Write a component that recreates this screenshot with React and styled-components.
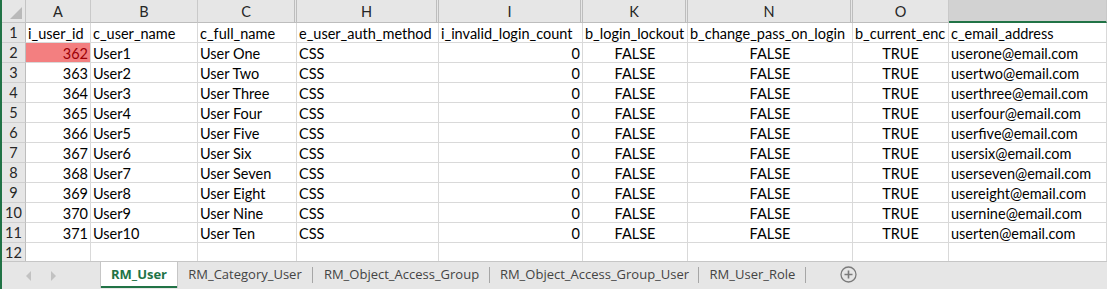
import React from 'react';
import styled, { createGlobalStyle } from 'styled-components';

const GlobalStyle = createGlobalStyle`
html, body {
  margin: 0;
  padding: 0;
  background: #ffffff;
}
`

const COLS = '24px 65px 107px 99px 142px 144px 105px 165px 96px 1fr';

const StyledWindow = styled.div`
width: 1107px;
height: 289px;
display: flex;
overflow: hidden;
background: #ffffff;
font-family: Lato, "Liberation Sans", sans-serif;
`
const StyledStrip = styled.div`
width: 2px;
flex-shrink: 0;
background: #217346;
`
const StyledMain = styled.div`
flex: 1;
display: flex;
flex-direction: column;
min-width: 0;
`
const StyledSheet = styled.div`
flex: 1;
overflow: hidden;
`
const StyledRow = styled.div`
display: grid;
grid-template-columns: ${COLS};
height: ${props => props.$height || 20}px;
`
const StyledCorner = styled.div`
position: relative;
background: #e6e6e6;
border-right: 1px solid #c4c4c4;
border-bottom: 1px solid #c4c4c4;
&::after {
  content: '';
  position: absolute;
  right: 3px;
  bottom: 3px;
  width: 0;
  height: 0;
  border-left: 12px solid transparent;
  border-bottom: 12px solid #b9b9b9;
}
`
const StyledColHead = styled.div`
display: flex;
align-items: center;
justify-content: center;
background: ${props => props.$selected ? '#d2d2d2' : '#e6e6e6'};
border-right: ${props => props.$gap ? '3px double #bdbdbd' : '1px solid #c9c9c9'};
border-bottom: ${props => props.$selected ? '2px solid #217346' : '1px solid #bdbdbd'};
color: #262626;
font-size: 14.5px;
padding-top: 1px;
`
const StyledRowHead = styled.div`
display: flex;
align-items: center;
justify-content: center;
background: #e6e6e6;
border-right: 1px solid #bdbdbd;
border-bottom: 1px solid #cfcfcf;
color: #262626;
font-size: 14.5px;
`
const StyledCell = styled.div`
display: flex;
align-items: center;
justify-content: ${props => props.$align === 'right' ? 'flex-end' : props.$align === 'center' ? 'center' : 'flex-start'};
padding: 1px 2px 0 2px;
background: ${props => props.$fill || 'transparent'};
color: ${props => props.$color || '#000000'};
border-right: 1px solid #d9d9d9;
border-bottom: 1px solid #d9d9d9;
font-size: 14.5px;
white-space: nowrap;
overflow: hidden;
`
const StyledTabBar = styled.div`
height: 27px;
flex-shrink: 0;
display: flex;
align-items: stretch;
background: #e6e6e6;
border-top: 1px solid #c6c6c6;
font-family: "Open Sans", "Noto Sans", sans-serif;
`
const StyledNav = styled.div`
width: 99px;
display: flex;
align-items: center;
gap: 20px;
padding-left: 24px;
box-sizing: border-box;
`
const StyledArrow = styled.span`
width: 0;
height: 0;
border-top: 5px solid transparent;
border-bottom: 5px solid transparent;
${props => props.$dir === 'left'
  ? 'border-right: 5px solid #c2c2c2;'
  : 'border-left: 5px solid #c2c2c2;'}
`
const StyledTab = styled.div`
width: ${props => props.$width}px;
box-sizing: border-box;
display: flex;
align-items: center;
justify-content: center;
font-size: 13px;
position: relative;
color: ${props => props.$active ? '#217346' : '#444444'};
font-weight: ${props => props.$active ? 700 : 400};
background: ${props => props.$active ? '#ffffff' : 'transparent'};
border-bottom: ${props => props.$active ? '2px solid #217346' : '2px solid transparent'};
box-shadow: ${props => props.$active ? '-1px 0 0 #c6c6c6, 1px 0 0 #c6c6c6' : 'none'};
margin-bottom: 1px;
${props => props.$sep && `
&::after {
  content: '';
  position: absolute;
  right: 0;
  top: 5px;
  height: 16px;
  width: 1px;
  background: #a6a6a6;
}
`}
`
const StyledAdd = styled.div`
width: 84px;
display: flex;
align-items: center;
justify-content: center;
padding-bottom: 2px;
`

const names = ['One', 'Two', 'Three', 'Four', 'Five', 'Six', 'Seven', 'Eight', 'Nine', 'Ten'];

const letters = [
  { l: 'A' }, { l: 'B' }, { l: 'C', gap: true }, { l: 'H', gap: true }, { l: 'I', gap: true },
  { l: 'K', gap: true }, { l: 'N', gap: true }, { l: 'O' }, { l: '', selected: true },
];

const headers = ['i_user_id', 'c_user_name', 'c_full_name', 'e_user_auth_method', 'i_invalid_login_count',
  'b_login_lockout', 'b_change_pass_on_login', 'b_current_enc', 'c_email_address'];

const tabs = [
  { name: 'RM_User', width: 76, active: true },
  { name: 'RM_Category_User', width: 136, sep: true },
  { name: 'RM_Object_Access_Group', width: 177, sep: true },
  { name: 'RM_Object_Access_Group_User', width: 209, sep: true },
  { name: 'RM_User_Role', width: 107, sep: true },
];

const App = () => {
  return (
    <StyledWindow>
      <GlobalStyle />
      <StyledStrip />
      <StyledMain>
        <StyledSheet>
          <StyledRow $height={23}>
            <StyledCorner />
            {letters.map((c, i) => (
              <StyledColHead key={i} $gap={c.gap} $selected={c.selected}>{c.l}</StyledColHead>
            ))}
          </StyledRow>
          <StyledRow>
            <StyledRowHead>1</StyledRowHead>
            {headers.map(h => <StyledCell key={h}>{h}</StyledCell>)}
          </StyledRow>
          {names.map((n, i) => (
            <StyledRow key={n}>
              <StyledRowHead>{i + 2}</StyledRowHead>
              <StyledCell $align='right' $fill={i === 0 ? '#f37f80' : undefined} $color={i === 0 ? '#9c0006' : undefined}>{362 + i}</StyledCell>
              <StyledCell>User{i + 1}</StyledCell>
              <StyledCell>User {n}</StyledCell>
              <StyledCell>CSS</StyledCell>
              <StyledCell $align='right'>0</StyledCell>
              <StyledCell $align='center'>FALSE</StyledCell>
              <StyledCell $align='center'>FALSE</StyledCell>
              <StyledCell $align='center'>TRUE</StyledCell>
              <StyledCell>user{n.toLowerCase()}@email.com</StyledCell>
            </StyledRow>
          ))}
          <StyledRow>
            <StyledRowHead>12</StyledRowHead>
            {headers.map(h => <StyledCell key={h} />)}
          </StyledRow>
        </StyledSheet>
        <StyledTabBar>
          <StyledNav>
            <StyledArrow $dir='left' />
            <StyledArrow $dir='right' />
          </StyledNav>
          {tabs.map(t => (
            <StyledTab key={t.name} $width={t.width} $active={t.active} $sep={t.sep}>{t.name}</StyledTab>
          ))}
          <StyledAdd>
            <svg width="17" height="17" viewBox="0 0 17 17">
              <circle cx="8.5" cy="8.5" r="7.5" fill="none" stroke="#7b7b7b" strokeWidth="1.3" />
              <path d="M8.5 4.5v8M4.5 8.5h8" stroke="#7b7b7b" strokeWidth="1.6" />
            </svg>
          </StyledAdd>
        </StyledTabBar>
      </StyledMain>
    </StyledWindow>
  );
}
export default App
